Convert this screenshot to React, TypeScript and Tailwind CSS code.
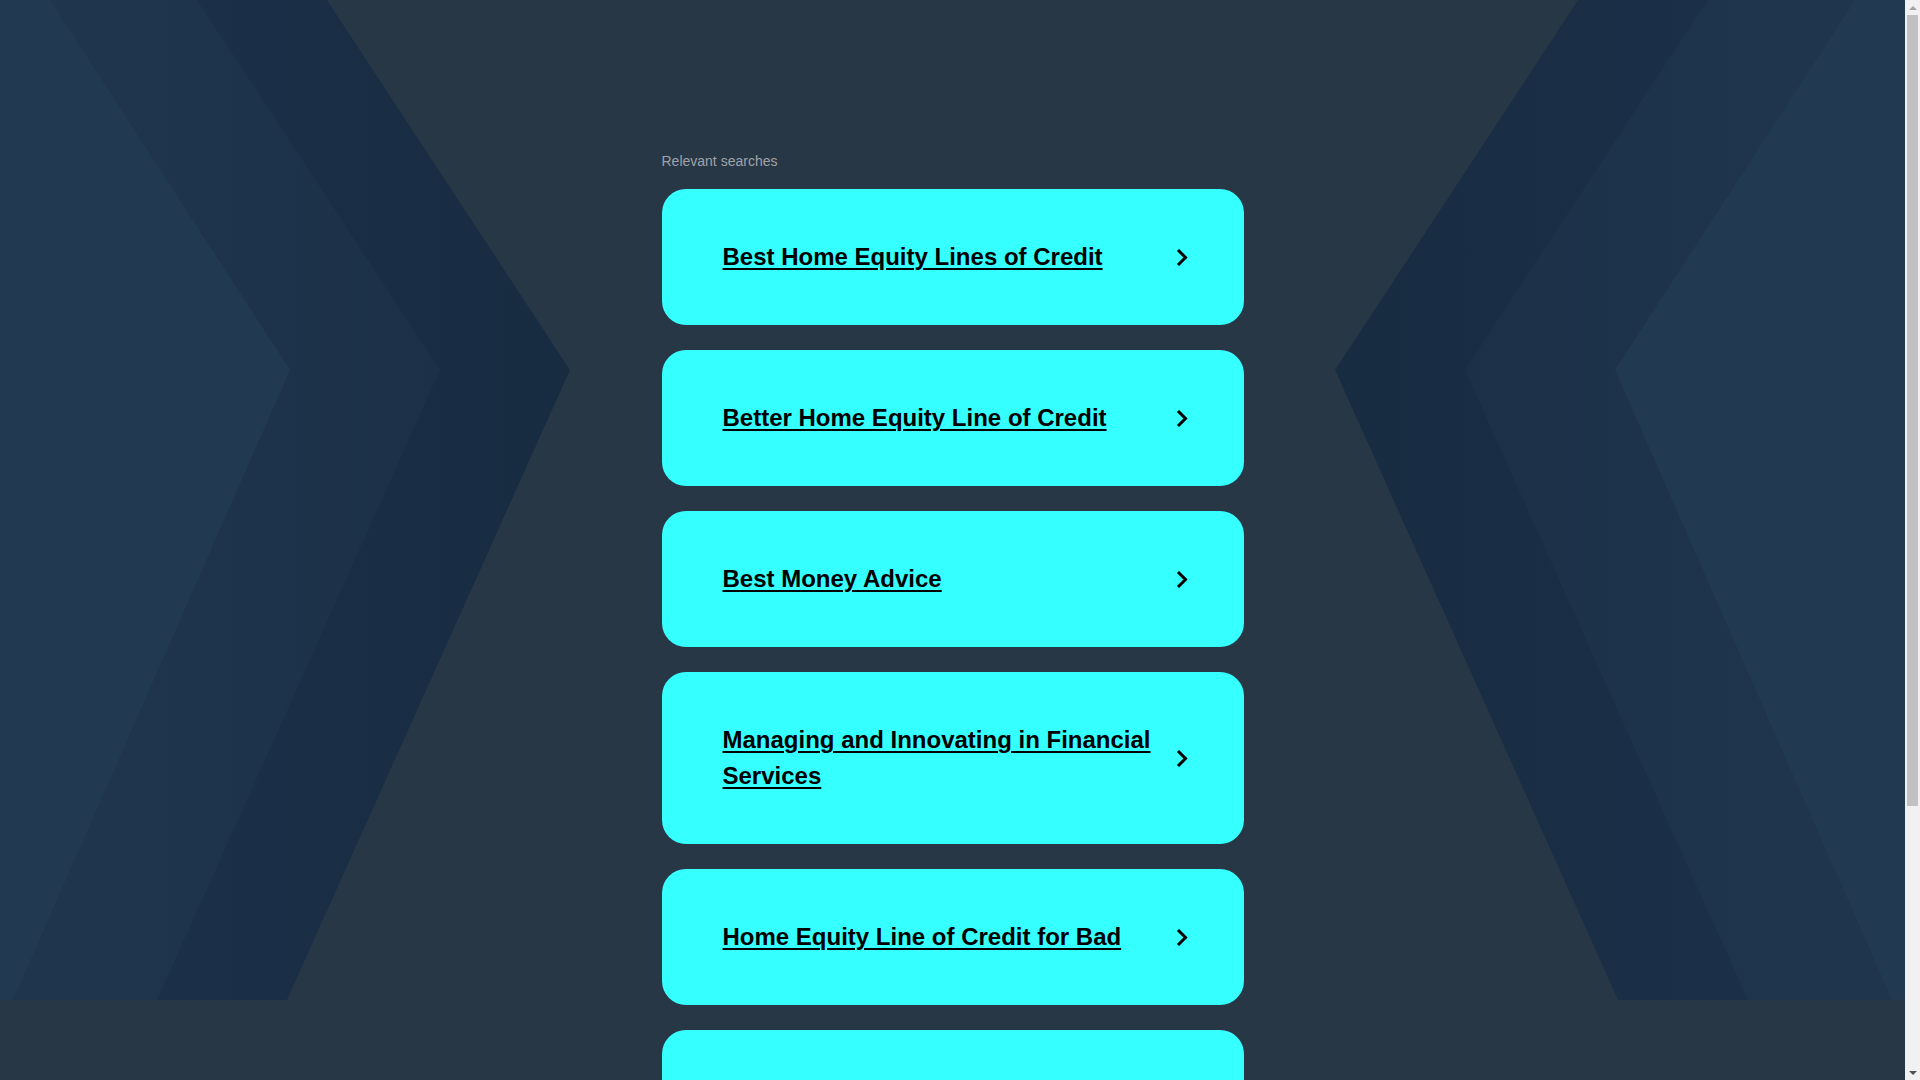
const searches = [
  "Best Home Equity Lines of Credit",
  "Better Home Equity Line of Credit",
  "Best Money Advice",
  "Managing and Innovating in Financial Services",
  "Home Equity Line of Credit for Bad",
  "Home Equity Loan Rates",
];

function Chevrons() {
  const side = (
    <>
      <polygon points="0,0 327,0 570,370 287,1000 0,1000" fill="url(#band3)" />
      <polygon points="0,0 197,0 440,370 157,1000 0,1000" fill="url(#band2)" />
      <polygon points="0,0 50,0 290,370 13,1000 0,1000" fill="#213a52" />
    </>
  );

  return (
    <svg
      className="absolute top-0 left-0 w-full h-[1000px]"
      viewBox="0 0 1905 1000"
      preserveAspectRatio="none"
    >
      <defs>
        <linearGradient id="band3" gradientUnits="userSpaceOnUse" x1="200" y1="0" x2="570" y2="0">
          <stop offset="0" stopColor="#1b3048" />
          <stop offset="1" stopColor="#172c41" />
        </linearGradient>
        <linearGradient id="band2" gradientUnits="userSpaceOnUse" x1="100" y1="0" x2="440" y2="0">
          <stop offset="0" stopColor="#1f354d" />
          <stop offset="1" stopColor="#1c3148" />
        </linearGradient>
      </defs>
      {side}
      <g transform="translate(1905,0) scale(-1,1)">{side}</g>
    </svg>
  );
}

function Arrow() {
  return (
    <svg className="ml-4 w-3 h-[19px] shrink-0" viewBox="0 0 12 19" fill="none">
      <polyline points="2,2 9.5,9.5 2,17" stroke="#000" strokeWidth="3" strokeLinejoin="miter" />
    </svg>
  );
}

function SearchCard({ label }: { label: string }) {
  return (
    <a
      href="#"
      className="flex items-center rounded-3xl bg-[#35ffff] pl-[61px] pr-[56px] py-[50px] text-black"
    >
      <span className="flex-1 text-[24px] leading-[36px] font-bold underline decoration-2 underline-offset-[3px]">
        {label}
      </span>
      <Arrow />
    </a>
  );
}

// page scrollbar as the browser drew it
function Scrollbar() {
  return (
    <div className="w-[15px] h-screen shrink-0 bg-[#f1f1f1] flex flex-col items-center">
      <div className="h-[15px] flex items-center justify-center">
        <div className="w-0 h-0 border-x-[4px] border-x-transparent border-b-[4px] border-b-[#a3a3a3]" />
      </div>
      <div className="w-[11px] h-[791px] bg-[#c1c1c1]" />
      <div className="flex-1" />
      <div className="h-[15px] flex items-center justify-center">
        <div className="w-0 h-0 border-x-[4px] border-x-transparent border-t-[4px] border-t-[#505050]" />
      </div>
    </div>
  );
}

export default function App() {
  return (
    <div className="flex h-screen overflow-hidden bg-[#283746] font-['Liberation_Sans',Arial,sans-serif]">
      <main className="relative flex-1 overflow-hidden">
        <Chevrons />
        <div className="relative flex flex-col items-center pt-[151px] pb-10">
          <div className="w-[582px]">
            <p className="text-[14px] leading-5 text-[#9ea3a9] mb-[18px]">Relevant searches</p>
            <div className="flex flex-col gap-[25px]">
              {searches.map((s) => (
                <SearchCard key={s} label={s} />
              ))}
            </div>
          </div>
        </div>
      </main>
      <Scrollbar />
    </div>
  );
}
